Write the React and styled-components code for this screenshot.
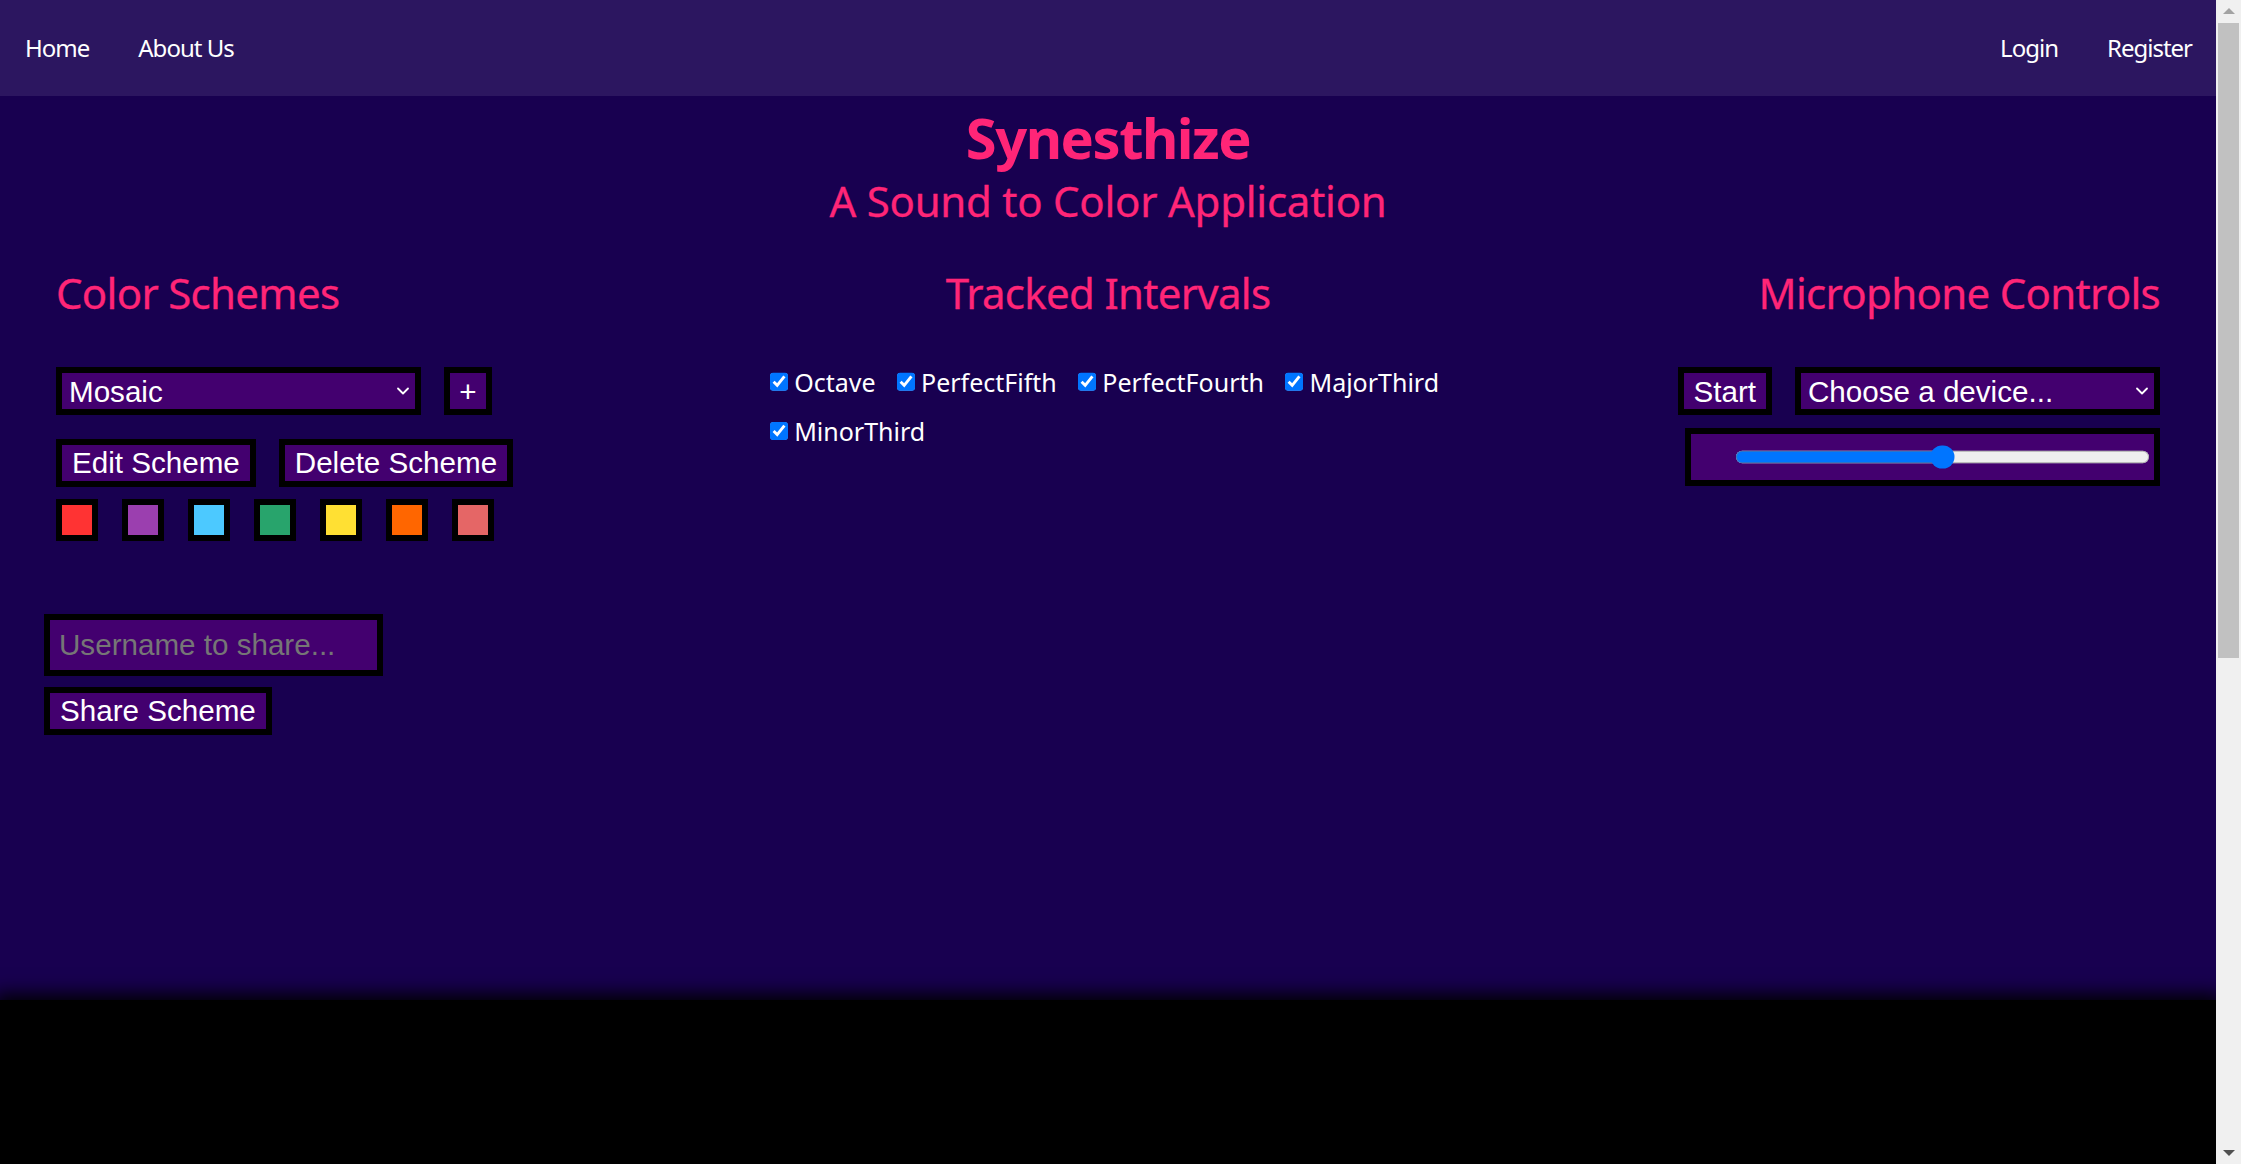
import React, { useState } from 'react';
import styled, { createGlobalStyle } from 'styled-components';
import { ChevronDown } from 'lucide-react';

const GlobalStyle = createGlobalStyle`
  html, body {
    margin:0;
    padding:0;
    background:#180050;
  }
  body {
    font-family:"Noto Sans", "Open Sans", sans-serif;
  }
`;

const Page = styled.div`
  margin-right:25px;
`;

// the browser's own scrollbar is hidden in the capture, so the rail is drawn on top
const ScrollRail = styled.div`
  position:fixed;
  top:0;
  right:0;
  width:25px;
  height:100vh;
  background:#f0f0f0;
  display:flex;
  flex-direction:column;
  align-items:center;
`;
const RailButton = styled.div`
  width:100%;
  height:22px;
  display:flex;
  align-items:center;
  justify-content:center;
  margin-top:${p => p.end ? 'auto' : '0'};
`;
const Arrow = styled.div`
  width:0;
  height:0;
  border-left:6px solid transparent;
  border-right:6px solid transparent;
  ${p => p.down
    ? `border-top:6px solid ${p.color};`
    : `border-bottom:6px solid ${p.color};`}
`;
const RailThumb = styled.div`
  width:21px;
  height:635px;
  margin-top:1px;
  background:#c1c1c1;
`;

const NavBar = styled.nav`
  height:96px;
  box-sizing:border-box;
  padding:0 24px 0 25px;
  background:#2c1660;
  display:flex;
  align-items:center;
  justify-content:space-between;
`;
const NavGroup = styled.div`
  display:flex;
  gap:49px;
`;
const NavLink = styled.a`
  color:#fff;
  font-size:24px;
  letter-spacing:-1px;
  line-height:1;
  text-decoration:none;
  cursor:pointer;
`;

const Header = styled.header`
  text-align:center;
  color:#ff2577;
`;
const Title = styled.h1`
  margin:13px 0 0;
  font-size:56px;
  font-weight:700;
  letter-spacing:-1.5px;
  line-height:1;
`;
const Subtitle = styled.h2`
  margin:15px 0 0;
  font-size:42px;
  font-weight:400;
  letter-spacing:-0.25px;
  line-height:1;
  -webkit-text-stroke:0.3px currentColor;
`;

const Main = styled.main`
  display:grid;
  grid-template-columns:repeat(3, 1fr);
  margin-top:50px;
`;
const Column = styled.section`
  display:flex;
  flex-direction:column;
  align-items:${p => p.align || 'stretch'};
  padding:${p => p.pad || '0'};
`;
const SectionTitle = styled.h2`
  margin:0;
  font-size:42px;
  font-weight:400;
  letter-spacing:-0.7px;
  line-height:1;
  color:#ff2577;
  -webkit-text-stroke:0.3px currentColor;
  text-align:${p => p.center ? 'center' : 'inherit'};
`;

const SchemePanel = styled.div`
  display:flex;
  flex-direction:column;
  align-items:flex-start;
  padding-left:12px;
`;
const Row = styled.div`
  display:flex;
  gap:${p => p.gap ?? 23}px;
  margin-top:${p => p.mt || 0}px;
`;

const controlFont = `
  font-family:"Liberation Sans", Arial, sans-serif;
  font-size:29.6px;
  color:#fff;
  background:#43006f;
  border:6px solid #000;
  border-radius:0;
  box-sizing:border-box;
`;

const SelectWrap = styled.div`
  position:relative;
  width:${p => p.w}px;
  height:48px;
`;
const Select = styled.select`
  ${controlFont}
  appearance:none;
  width:100%;
  height:100%;
  padding:0 30px 0 7px;
  outline:none;
  cursor:pointer;
`;
const SelectChevron = styled(ChevronDown)`
  position:absolute;
  right:8px;
  top:50%;
  margin-top:-10px;
  color:#fff;
  pointer-events:none;
`;
const Button = styled.button`
  ${controlFont}
  height:48px;
  width:${p => p.w ? p.w + 'px' : 'auto'};
  padding:0 ${p => p.w ? 0 : 10}px;
  line-height:1;
  cursor:pointer;
`;
const Swatch = styled.div`
  width:42px;
  height:42px;
  box-sizing:border-box;
  border:6px solid #000;
  background:${p => p.color};
`;

const ShareForm = styled.div`
  display:flex;
  flex-direction:column;
  align-items:flex-start;
  gap:11.6px;
  margin-top:72.3px;
`;
const TextInput = styled.input`
  ${controlFont}
  width:339px;
  height:62px;
  padding:0 9px;
  outline:none;
  &::placeholder { color:#767676; }
`;

const IntervalList = styled.div`
  display:flex;
  flex-wrap:wrap;
  column-gap:21px;
  row-gap:24.3px;
  margin-top:55.5px;
`;
const IntervalLabel = styled.label`
  display:flex;
  align-items:center;
  gap:5px;
  color:#fff;
  font-size:25px;
  line-height:1;
  cursor:pointer;
`;
const Check = styled.input`
  zoom:1.5;
  margin:0;
  accent-color:#0075ff;
`;

const SliderBox = styled.div`
  width:475px;
  height:57.4px;
  box-sizing:border-box;
  border:6px solid #000;
  background:#43006f;
  display:flex;
  align-items:center;
  justify-content:flex-end;
  padding-right:4px;
  margin-top:13px;
`;
const Range = styled.input`
  zoom:1.55;
  width:268px;
  margin:0;
  accent-color:#0075ff;
`;

const Visualizer = styled.div`
  height:1050px;
  margin-top:264.8px;
  background:#000;
  box-shadow:0 0 18px 6px #000;
`;

const swatches = ['#ff3333', '#9b3faf', '#4cc9ff', '#28a46c', '#ffe033', '#ff6600', '#e56666'];
const intervalNames = ['Octave', 'PerfectFifth', 'PerfectFourth', 'MajorThird', 'MinorThird'];

function Dropdown({ w, children, ...rest }) {
  return (
    <SelectWrap w={w}>
      <Select {...rest}>{children}</Select>
      <SelectChevron size={20} strokeWidth={2.2} />
    </SelectWrap>
  );
}

export default function App() {
  const [tracked, setTracked] = useState(() => Object.fromEntries(intervalNames.map(n => [n, true])));
  const [volume, setVolume] = useState(50);
  const [scheme, setScheme] = useState('Mosaic');
  const [username, setUsername] = useState('');

  return (
    <>
      <GlobalStyle />
      <Page>
        <NavBar>
          <NavGroup>
            <NavLink>Home</NavLink>
            <NavLink>About Us</NavLink>
          </NavGroup>
          <NavGroup>
            <NavLink>Login</NavLink>
            <NavLink>Register</NavLink>
          </NavGroup>
        </NavBar>

        <Header>
          <Title>Synesthize</Title>
          <Subtitle>A Sound to Color Application</Subtitle>
        </Header>

        <Main>
          <Column pad="0 0 0 44px" align="flex-start">
            <SchemePanel>
              <SectionTitle>Color Schemes</SectionTitle>
              <Row mt={53.3}>
                <Dropdown w={365} value={scheme} onChange={e => setScheme(e.target.value)}>
                  <option>Mosaic</option>
                  <option>Sunset</option>
                  <option>Ocean</option>
                </Dropdown>
                <Button w={48}>+</Button>
              </Row>
              <Row mt={23.6}>
                <Button>Edit Scheme</Button>
                <Button>Delete Scheme</Button>
              </Row>
              <Row mt={12.4} gap={24}>
                {swatches.map(c => <Swatch key={c} color={c} />)}
              </Row>
            </SchemePanel>
            <ShareForm>
              <TextInput
                placeholder="Username to share..."
                value={username}
                onChange={e => setUsername(e.target.value)}
              />
              <Button>Share Scheme</Button>
            </ShareForm>
          </Column>

          <Column pad="0 31px">
            <SectionTitle center>Tracked Intervals</SectionTitle>
            <IntervalList>
              {intervalNames.map(n => (
                <IntervalLabel key={n}>
                  <Check
                    type="checkbox"
                    checked={tracked[n]}
                    onChange={() => setTracked(t => ({ ...t, [n]: !t[n] }))}
                  />
                  {n}
                </IntervalLabel>
              ))}
            </IntervalList>
          </Column>

          <Column pad="0 56px 0 0" align="flex-end">
            <SectionTitle>Microphone Controls</SectionTitle>
            <Row mt={53.3}>
              <Button>Start</Button>
              <Dropdown w={365} defaultValue="">
                <option value="" disabled>Choose a device...</option>
                <option value="default">Default microphone</option>
              </Dropdown>
            </Row>
            <SliderBox>
              <Range
                type="range"
                min={0}
                max={100}
                value={volume}
                onChange={e => setVolume(Number(e.target.value))}
              />
            </SliderBox>
          </Column>
        </Main>

        <Visualizer />
      </Page>

      <ScrollRail>
        <RailButton><Arrow color="#a3a3a3" /></RailButton>
        <RailThumb />
        <RailButton end="true"><Arrow down color="#505050" /></RailButton>
      </ScrollRail>
    </>
  );
}
